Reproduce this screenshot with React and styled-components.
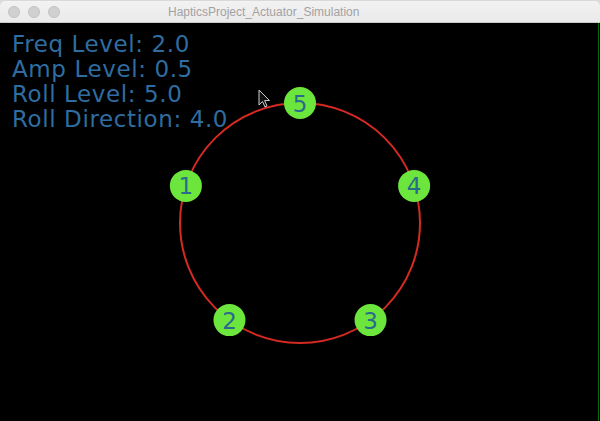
import styled, { createGlobalStyle } from 'styled-components'

const GlobalStyle = createGlobalStyle`
  html, body {
    margin: 0;
    padding: 0;
    background: #d9d9d9;
    overflow: hidden;
  }
`

const nodes = [
  { id: 1, angle: 198 },
  { id: 2, angle: 126 },
  { id: 3, angle: 54 },
  { id: 4, angle: -18 },
  { id: 5, angle: -90 },
]

const levels = [
  ['Freq Level', '2.0'],
  ['Amp Level', '0.5'],
  ['Roll Level', '5.0'],
  ['Roll Direction', '4.0'],
]

function App() {
  const cx = 300
  const cy = 200
  const r = 120
  return (
    <>
      <GlobalStyle />
      <Window>
        <TitleBar>
          <Lights>
            <Light />
            <Light />
            <Light />
          </Lights>
          <Title>HapticsProject_Actuator_Simulation</Title>
        </TitleBar>
        <Canvas>
          <Readout>
            {levels.map(([label, value]) => (
              <Line key={label}>{label}: {value}</Line>
            ))}
          </Readout>
          <Diagram width="600" height="399" viewBox="0 0 600 399">
            <circle cx={cx} cy={cy} r={r} fill="none" stroke="#d42a22" strokeWidth="2" />
            {nodes.map((n) => {
              const a = (n.angle * Math.PI) / 180
              const x = cx + r * Math.cos(a)
              const y = cy + r * Math.sin(a)
              return (
                <g key={n.id}>
                  <circle cx={x} cy={y} r="16" fill="#6ce63c" />
                  <NodeLabel x={x} y={y + 8.5} textAnchor="middle">{n.id}</NodeLabel>
                </g>
              )
            })}
            <path
              d="M259 67 L259 82 L262.5 78.5 L265 84 L267 83 L264.6 77.6 L269.5 77.5 Z"
              fill="#111"
              stroke="#cfcfcf"
              strokeWidth="1"
              strokeLinejoin="round"
            />
          </Diagram>
          <EdgeLine />
        </Canvas>
      </Window>
    </>
  )
}

export default App

const Window = styled.div`
  width: 600px;
  height: 421px;
  display: flex;
  flex-direction: column;
  padding-top: 1px;
  box-sizing: border-box;
`
const TitleBar = styled.div`
  height: 21px;
  flex-shrink: 0;
  display: flex;
  align-items: center;
  position: relative;
  background: linear-gradient(#f3f2f3, #ebeaeb);
  border-radius: 5px 5px 0 0;
  border-bottom: 1px solid #c9c9c9;
`
const Lights = styled.div`
  display: flex;
  gap: 8px;
  padding-left: 8px;
`
const Light = styled.span`
  width: 12px;
  height: 12px;
  border-radius: 50%;
  background: #d1d0d1;
  border: 0.5px solid #c4c3c4;
  box-sizing: border-box;
`
const Title = styled.div`
  position: absolute;
  left: 168px;
  top: 4px;
  font-family: "Liberation Sans", Arial, sans-serif;
  font-size: 12px;
  color: #a2a1a2;
`
const Canvas = styled.div`
  flex: 1;
  position: relative;
  background: #000;
`
const Readout = styled.div`
  position: relative;
  z-index: 1;
  padding: 9px 0 0 12px;
  display: flex;
  flex-direction: column;
`
const Line = styled.div`
  font-family: "DejaVu Sans", Verdana, sans-serif;
  font-size: 23px;
  letter-spacing: 0.6px;
  line-height: 25px;
  color: #2f6da0;
`
const Diagram = styled.svg`
  position: absolute;
  left: 0;
  top: 0;
`
const NodeLabel = styled.text`
  font-family: "DejaVu Sans", Verdana, sans-serif;
  font-size: 23px;
  fill: #2b6a8c;
`
const EdgeLine = styled.div`
  position: absolute;
  right: 1px;
  top: 0;
  bottom: 0;
  width: 1px;
  background: #0b6b0b;
`
